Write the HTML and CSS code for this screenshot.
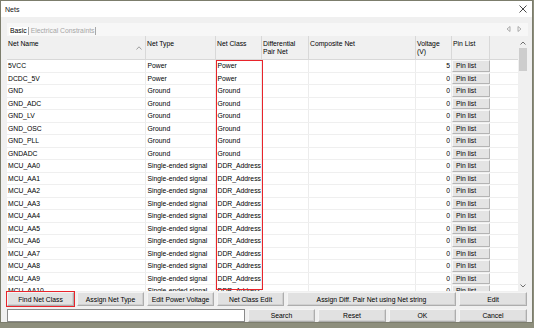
FILE: index.html
```html
<!DOCTYPE html>
<html>
<head>
<meta charset="utf-8">
<link rel="stylesheet" href="styles.css">
</head>
<body>
<div class="window">
  <div class="titlebar">
    <span class="title">Nets</span>
    <svg class="close" width="8" height="8" viewBox="0 0 8 8"><path d="M0.5 0.5 L7.5 7.5 M7.5 0.5 L0.5 7.5" stroke="#333" stroke-width="0.9" fill="none"/></svg>
  </div>
  <div class="client">
    <div class="tabs">
      <span class="tab active">Basic</span><span class="tab disabled">Electrical Constraints</span>
      <span class="tab-arrows">
        <svg width="5" height="6" viewBox="0 0 5 6"><path d="M4 0.5 L1 3 L4 5.5 Z" fill="none" stroke="#9a9a9a" stroke-width="0.8"/></svg>
        <svg width="5" height="6" viewBox="0 0 5 6"><path d="M1 0.5 L4 3 L1 5.5 Z" fill="none" stroke="#9a9a9a" stroke-width="0.8"/></svg>
      </span>
    </div>
    <div class="gridwrap">
      <div class="gridclip">
        <div class="row head">
          <div class="hc sortable">Net Name<svg class="sort" width="6" height="4" viewBox="0 0 6 4"><path d="M0.5 3.5 L3 0.8 L5.5 3.5" fill="none" stroke="#8a8a8a" stroke-width="0.8"/></svg></div>
          <div class="hc">Net Type</div>
          <div class="hc">Net Class</div>
          <div class="hc">Differential<br>Pair Net</div>
          <div class="hc">Composite Net</div>
          <div class="hc">Voltage<br>(V)</div>
          <div class="hc">Pin List</div>
          <div class="hc last"></div>
        </div>
        <div class="row"><div class="c">5VCC</div><div class="c">Power</div><div class="c">Power</div><div class="c"></div><div class="c"></div><div class="c num">5</div><div class="c pin"><span>Pin list</span></div><div class="c last"></div></div>
        <div class="row"><div class="c">DCDC_5V</div><div class="c">Power</div><div class="c">Power</div><div class="c"></div><div class="c"></div><div class="c num">0</div><div class="c pin"><span>Pin list</span></div><div class="c last"></div></div>
        <div class="row"><div class="c">GND</div><div class="c">Ground</div><div class="c">Ground</div><div class="c"></div><div class="c"></div><div class="c num">0</div><div class="c pin"><span>Pin list</span></div><div class="c last"></div></div>
        <div class="row"><div class="c">GND_ADC</div><div class="c">Ground</div><div class="c">Ground</div><div class="c"></div><div class="c"></div><div class="c num">0</div><div class="c pin"><span>Pin list</span></div><div class="c last"></div></div>
        <div class="row"><div class="c">GND_LV</div><div class="c">Ground</div><div class="c">Ground</div><div class="c"></div><div class="c"></div><div class="c num">0</div><div class="c pin"><span>Pin list</span></div><div class="c last"></div></div>
        <div class="row"><div class="c">GND_OSC</div><div class="c">Ground</div><div class="c">Ground</div><div class="c"></div><div class="c"></div><div class="c num">0</div><div class="c pin"><span>Pin list</span></div><div class="c last"></div></div>
        <div class="row"><div class="c">GND_PLL</div><div class="c">Ground</div><div class="c">Ground</div><div class="c"></div><div class="c"></div><div class="c num">0</div><div class="c pin"><span>Pin list</span></div><div class="c last"></div></div>
        <div class="row"><div class="c">GNDADC</div><div class="c">Ground</div><div class="c">Ground</div><div class="c"></div><div class="c"></div><div class="c num">0</div><div class="c pin"><span>Pin list</span></div><div class="c last"></div></div>
        <div class="row"><div class="c">MCU_AA0</div><div class="c">Single-ended signal</div><div class="c">DDR_Address</div><div class="c"></div><div class="c"></div><div class="c num">0</div><div class="c pin"><span>Pin list</span></div><div class="c last"></div></div>
        <div class="row"><div class="c">MCU_AA1</div><div class="c">Single-ended signal</div><div class="c">DDR_Address</div><div class="c"></div><div class="c"></div><div class="c num">0</div><div class="c pin"><span>Pin list</span></div><div class="c last"></div></div>
        <div class="row"><div class="c">MCU_AA2</div><div class="c">Single-ended signal</div><div class="c">DDR_Address</div><div class="c"></div><div class="c"></div><div class="c num">0</div><div class="c pin"><span>Pin list</span></div><div class="c last"></div></div>
        <div class="row"><div class="c">MCU_AA3</div><div class="c">Single-ended signal</div><div class="c">DDR_Address</div><div class="c"></div><div class="c"></div><div class="c num">0</div><div class="c pin"><span>Pin list</span></div><div class="c last"></div></div>
        <div class="row"><div class="c">MCU_AA4</div><div class="c">Single-ended signal</div><div class="c">DDR_Address</div><div class="c"></div><div class="c"></div><div class="c num">0</div><div class="c pin"><span>Pin list</span></div><div class="c last"></div></div>
        <div class="row"><div class="c">MCU_AA5</div><div class="c">Single-ended signal</div><div class="c">DDR_Address</div><div class="c"></div><div class="c"></div><div class="c num">0</div><div class="c pin"><span>Pin list</span></div><div class="c last"></div></div>
        <div class="row"><div class="c">MCU_AA6</div><div class="c">Single-ended signal</div><div class="c">DDR_Address</div><div class="c"></div><div class="c"></div><div class="c num">0</div><div class="c pin"><span>Pin list</span></div><div class="c last"></div></div>
        <div class="row"><div class="c">MCU_AA7</div><div class="c">Single-ended signal</div><div class="c">DDR_Address</div><div class="c"></div><div class="c"></div><div class="c num">0</div><div class="c pin"><span>Pin list</span></div><div class="c last"></div></div>
        <div class="row"><div class="c">MCU_AA8</div><div class="c">Single-ended signal</div><div class="c">DDR_Address</div><div class="c"></div><div class="c"></div><div class="c num">0</div><div class="c pin"><span>Pin list</span></div><div class="c last"></div></div>
        <div class="row"><div class="c">MCU_AA9</div><div class="c">Single-ended signal</div><div class="c">DDR_Address</div><div class="c"></div><div class="c"></div><div class="c num">0</div><div class="c pin"><span>Pin list</span></div><div class="c last"></div></div>
        <div class="row"><div class="c">MCU_AA10</div><div class="c">Single-ended signal</div><div class="c">DDR_Address</div><div class="c"></div><div class="c"></div><div class="c num">0</div><div class="c pin"><span>Pin list</span></div><div class="c last"></div></div>
      </div>
      <div class="scrollbar">
        <svg class="sb-up" width="6" height="4" viewBox="0 0 6 4"><path d="M0.5 3.5 L3 1 L5.5 3.5" fill="none" stroke="#606060" stroke-width="0.9"/></svg>
        <div class="sb-thumb"></div>
        <div class="sb-track"></div>
        <svg class="sb-down" width="6" height="4" viewBox="0 0 6 4"><path d="M0.5 0.5 L3 3 L5.5 0.5" fill="none" stroke="#606060" stroke-width="0.9"/></svg>
      </div>
      <div class="highlight-col"></div>
    </div>
    <div class="btnrow">
      <button class="btn w67 marked">Find Net Class</button>
      <button class="btn w67">Assign Net Type</button>
      <button class="btn w67">Edit Power Voltage</button>
      <button class="btn w67">Net Class Edit</button>
      <button class="btn w169">Assign Diff. Pair Net using Net string</button>
      <button class="btn w68">Edit</button>
    </div>
    <div class="btnrow second">
      <input class="search" type="text">
      <button class="btn w67">Search</button>
      <button class="btn w68">Reset</button>
      <button class="btn w67">OK</button>
      <button class="btn w68">Cancel</button>
    </div>
  </div>
</div>
</body>
</html>
```
FILE: styles.css
```css
* { box-sizing: border-box; }

body {
  margin: 0;
  background: #8d8e7c;
  font-family: "Liberation Sans", Arial, sans-serif;
  font-size: 6.8px;
  color: #000;
}

.window {
  position: relative;
  width: 533px;
  height: 323px;
  background: #f0f0f0;
  border: 1px solid #7c7d6c;
  display: flex;
  flex-direction: column;
}

.titlebar {
  height: 16px;
  background: #fff;
  display: flex;
  align-items: center;
  justify-content: space-between;
  padding: 0 5px 0 4px;
}

.title { font-size: 7px; color: #111; }

.close { display: block; }

.client {
  flex: 1;
  padding: 6px 4px 0 6px;
  display: flex;
  flex-direction: column;
}

.tabs {
  height: 13px;
  background: #f7f7f7;
  display: flex;
  align-items: flex-end;
  padding: 0 0 1px 2px;
  position: relative;
}

.tab {
  padding: 0 1px;
  line-height: 8px;
  border-right: 1px solid #a8a8a8;
  margin-right: 1px;
}

.tab.active { color: #000; background: #fff; }
.tab.disabled { color: #a6a6a6; }

.tab-arrows {
  margin-left: auto;
  display: flex;
  gap: 6px;
  padding: 0 6px 1px 0;
  align-self: center;
}
.tab-arrows svg { display: block; }

.gridwrap {
  height: 255px;
  display: flex;
  position: relative;
  background: #fff;
}

.gridclip {
  width: 511px;
  height: 255px;
  overflow: hidden;
}

.row {
  display: grid;
  grid-template-columns: 139px 70px 46px 47px 107px 36px 38px 28px;
  height: 12.5px;
  border-bottom: 1px solid #efefef;
}

.row.head {
  height: 24px;
  background: #f0f0f0;
  border-bottom: 1px solid #d8d8d8;
}

.hc {
  padding: 3.5px 2px 0 1px;
  line-height: 8.3px;
  border-right: 1px solid #d8d8d8;
  white-space: nowrap;
  overflow: hidden;
}
.hc.last { border-right: none; }

.hc.sortable { position: relative; }
.sort {
  position: absolute;
  right: 3px;
  top: 10px;
  display: block;
}

.c {
  padding-left: 1.5px;
  line-height: 11.5px;
  white-space: nowrap;
  overflow: hidden;
  border-right: 1px solid #ececec;
}

.c:first-child { padding-left: 1px; }
.c.last { border-right: none; }

.c.num { text-align: right; padding: 0 1px 0 0; }

.c.pin { padding: 0; border-right: none; }
.c.pin span {
  display: block;
  height: 100%;
  line-height: 10px;
  background: #e4e4e4;
  border: 1px solid #f8f8f8;
  border-right-color: #b4b4b4;
  border-bottom-color: #b4b4b4;
  padding-left: 3px;
}

.scrollbar {
  width: 10px;
  background: #f0f0f0;
  display: flex;
  flex-direction: column;
  align-items: center;
  padding: 5px 0 3px 0;
}

.sb-up, .sb-down { display: block; flex: none; }
.sb-thumb {
  width: 8px;
  height: 23px;
  background: #cdcdcd;
  margin-top: 3px;
  flex: none;
}
.sb-track { flex: 1; }

.highlight-col {
  position: absolute;
  left: 209px;
  top: 24px;
  width: 47px;
  height: 230px;
  border: 1.5px solid #e8242b;
  pointer-events: none;
}

.btnrow {
  display: flex;
  gap: 3px;
  margin-top: 1px;
  height: 14px;
}

.btnrow.second {
  margin-top: 3px;
  height: 13px;
}

.btn {
  font-family: inherit;
  font-size: 6.8px;
  color: #000;
  background: #e1e1e1;
  border: 1px solid #adadad;
  border-top-color: #f4f4f4;
  border-left-color: #f4f4f4;
  padding: 0;
  margin: 0;
  height: 100%;
  flex: none;
  box-shadow: inset -1px -1px 0 #d0d0d0;
}

.w67 { width: 67px; }
.w68 { width: 68px; }
.w169 { width: 169px; }

.btn.marked { outline: 1.5px solid #e8242b; outline-offset: 0; }

.search {
  width: 238px;
  height: 100%;
  margin: 0;
  padding: 0;
  background: #fff;
  border: 1px solid #8a8a8a;
  flex: none;
}
```
